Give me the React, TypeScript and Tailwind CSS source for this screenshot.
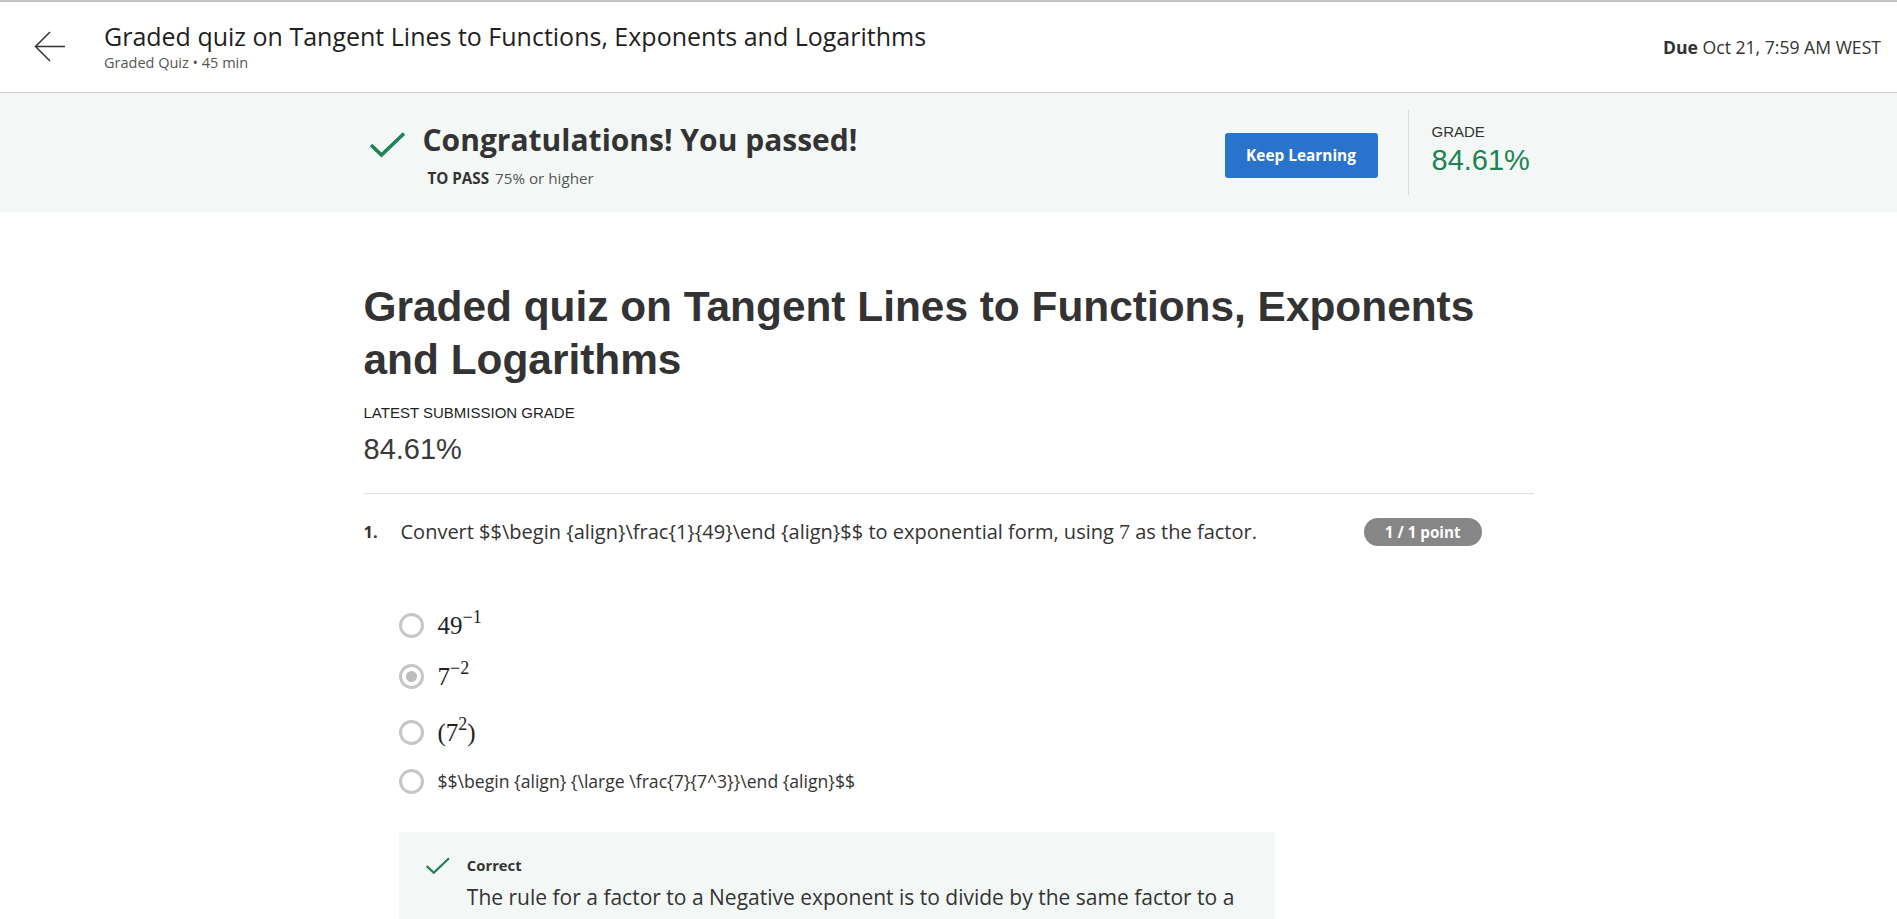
import React from 'react'

const options = [
  { key: 'a', mt: 'mt-[57px]', selected: false, kind: 'math', base: '49', sup: '−1' },
  { key: 'b', mt: 'mt-[7px]', selected: true, kind: 'math', base: '7', sup: '−2' },
  { key: 'c', mt: 'mt-[12px]', selected: false, kind: 'paren', base: '7', sup: '2' },
  { key: 'd', mt: 'mt-[5px]', selected: false, kind: 'text', text: '$$\\begin {align} {\\large \\frac{7}{7^3}}\\end {align}$$' },
]

function Check({ className, width = 3.6 }: { className: string; width?: number }) {
  return (
    <svg viewBox="0 0 36 26" className={className} fill="none">
      <polyline points="1,13 11.5,23 34,1.5" stroke="#1f8354" strokeWidth={width} />
    </svg>
  )
}

function Radio({ selected }: { selected: boolean }) {
  return (
    <span className="w-[25px] h-[25px] rounded-full border-[3px] border-[#c6c6c6] flex items-center justify-center shrink-0">
      {selected && <span className="w-[11px] h-[11px] rounded-full bg-[#bdbdbd]" />}
    </span>
  )
}

function Option({ o }: { o: (typeof options)[number] }) {
  return (
    <div className={`flex items-center gap-[14px] h-[44px] ${o.mt}`}>
      <Radio selected={o.selected} />
      {o.kind === 'text' ? (
        <span className="text-[17.6px] text-[#333]">{o.text}</span>
      ) : (
        <span className="font-['Liberation_Serif',serif] text-[25px] leading-none text-[#222]">
          {o.kind === 'paren' && '('}
          {o.base}
          <sup className="text-[18px] relative -top-[11px]">{o.sup}</sup>
          {o.kind === 'paren' && ')'}
        </span>
      )}
    </div>
  )
}

export default function App() {
  return (
    <div className="min-h-screen bg-white font-['Open_Sans',sans-serif] text-[#333]">
      <header className="h-[93px] border-t-2 border-t-[#c4c4c4] border-b border-b-[#c8c8c8] flex items-center justify-between pl-[34px] pr-[16px]">
        <div className="flex items-center gap-[38px]">
          <svg viewBox="0 0 32 32" className="w-[32px] h-[32px]" fill="none">
            <path d="M31 15.5H1.5M16 1L1.5 15.5L16 30" stroke="#333" strokeWidth="1.5" />
          </svg>
          <div className="flex flex-col gap-[2px] -mt-[2px]">
            <h2 className="text-[25px] leading-[30px] text-[#1f1f1f]">
              Graded quiz on Tangent Lines to Functions, Exponents and Logarithms
            </h2>
            <p className="text-[14.5px] leading-[19px] text-[#555]">Graded Quiz • 45 min</p>
          </div>
        </div>
        <div className="text-[17.6px] text-[#333]">
          <span className="font-bold">Due</span> Oct 21, 7:59 AM WEST
        </div>
      </header>

      <section className="h-[119px] bg-[#f3f8f6]">
        <div className="w-[1170px] mx-auto h-full flex">
          <div className="pt-[27px]">
            <div className="flex items-start gap-[17px] pl-[6px]">
              <Check className="w-[36px] h-[26px] mt-[12px]" />
              <h3 className="text-[30px] leading-[40px] font-bold text-[#333]">Congratulations! You passed!</h3>
            </div>
            <p className="mt-[8px] ml-[64px] text-[15.2px] leading-[20px] text-[#555]">
              <span className="font-bold text-[#333] mr-[6px]">TO PASS</span>75% or higher
            </p>
          </div>
          <div className="ml-auto flex items-center">
            <button className="w-[153px] h-[45px] mt-[6px] rounded-[3px] bg-[#2a73cc] text-white text-[15.4px] font-bold">
              Keep Learning
            </button>
            <div className="ml-[30px] w-px h-[85px] bg-[#dcdcdc]" />
            <div className="ml-[23px] w-[102px] -mt-[4px] font-['Liberation_Sans',sans-serif]">
              <div className="text-[15px] leading-[18px] text-[#333]">GRADE</div>
              <div className="mt-px text-[29px] leading-[36px] text-[#1f8354]">84.61%</div>
            </div>
          </div>
        </div>
      </section>

      <main className="w-[1170px] mx-auto pt-[68px]">
        <h1 className="font-['Liberation_Sans',sans-serif] font-bold text-[42.4px] leading-[53px] text-[#333]">
          Graded quiz on Tangent Lines to Functions, Exponents and Logarithms
        </h1>
        <div className="mt-[17px] font-['Liberation_Sans',sans-serif] text-[15px] leading-[20px] text-[#1f1f1f]">
          LATEST SUBMISSION GRADE
        </div>
        <div className="mt-[8px] font-['Liberation_Sans',sans-serif] text-[29px] leading-[36px] text-[#3a3a3a]">84.61%</div>
        <div className="mt-[26px] border-t border-[#e1e1e1]" />

        <div className="pt-[24px] flex items-start">
          <span className="w-[37px] text-[16.5px] leading-[28px] font-bold text-[#333]">1.</span>
          <p className="flex-1 text-[20px] leading-[28px] text-[#333]">
            Convert $$\begin {'{align}'}\frac{'{1}{49}'}\end {'{align}'}$$ to exponential form, using{' '}
            <span className="font-['Liberation_Serif',serif] text-[22px]">7</span> as the factor.
          </p>
          <span className="ml-[32px] mr-[52px] h-[28px] px-[21px] rounded-full bg-[#868686] text-white text-[15.2px] font-bold flex items-center">
            1 / 1 point
          </span>
        </div>

        <div className="pl-[35px]">
          {options.map((o) => (
            <Option key={o.key} o={o} />
          ))}

          <div className="mt-[29px] w-[876px] bg-[#f3f8f6] pl-[27px] pr-[8px] pt-[22px] pb-[24px]">
            <div className="flex items-start gap-[17px]">
              <Check className="w-[29px] h-[22px] mt-[1px]" width={3.4} />
              <div>
                <div className="text-[14.8px] leading-[22px] font-bold text-[#333]">Correct</div>
                <p className="mt-[6px] text-[21px] leading-[30px] text-[#333]">
                  The rule for a factor to a Negative exponent is to divide by the same factor to a positive
                  exponent.
                </p>
              </div>
            </div>
          </div>
        </div>
      </main>
    </div>
  )
}
